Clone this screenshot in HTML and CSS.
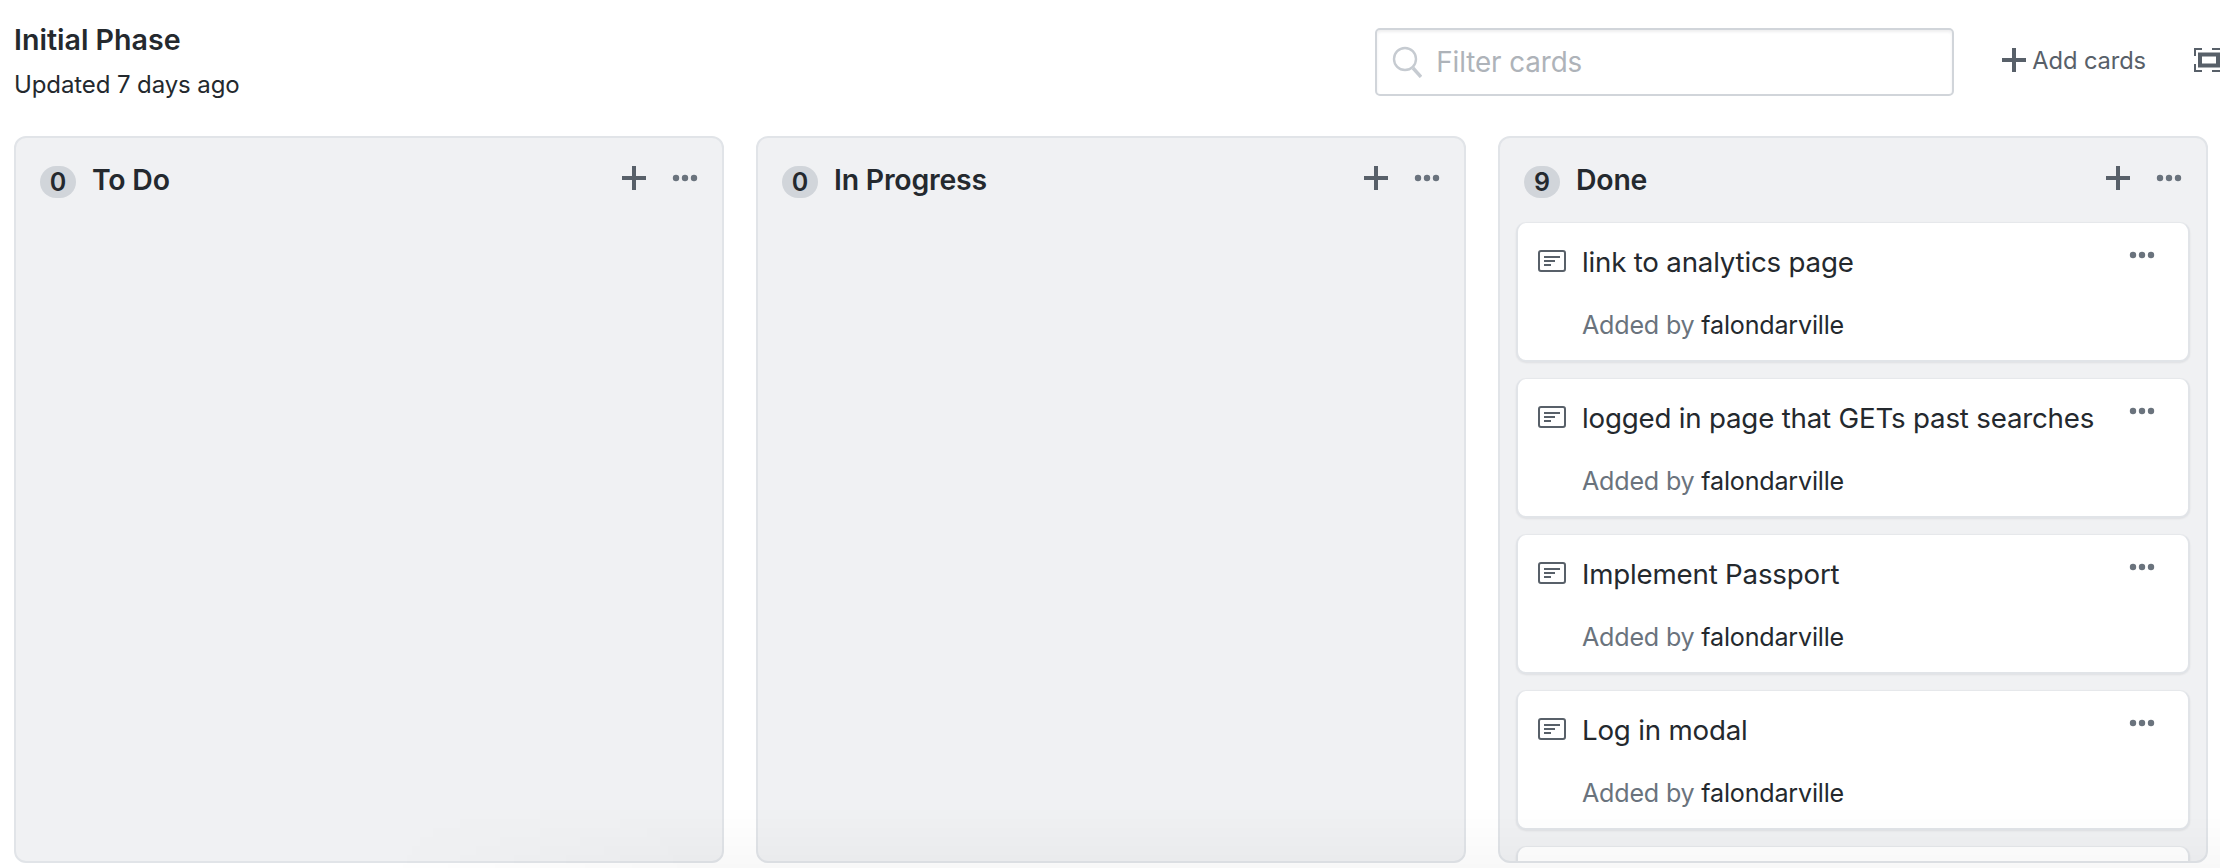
FILE: index.html
```html
<!DOCTYPE html>
<html lang="en">
<head>
<meta charset="utf-8">
<title>Initial Phase</title>
<link rel="stylesheet" href="styles.css">
</head>
<body>
<svg class="defs" width="0" height="0" aria-hidden="true">
  <symbol id="i-plus" viewBox="0 0 26 24"><path d="M13 0v24M1 12h24" fill="none" stroke="currentColor" stroke-width="4"/></symbol>
  <symbol id="i-dots" viewBox="0 0 26 8"><circle cx="4" cy="4" r="3.2" fill="currentColor"/><circle cx="13" cy="4" r="3.2" fill="currentColor"/><circle cx="22" cy="4" r="3.2" fill="currentColor"/></symbol>
  <symbol id="i-note" viewBox="0 0 28 22"><rect x="1" y="1" width="26" height="20" rx="2" fill="none" stroke="currentColor" stroke-width="2"/><path d="M6 7h16M6 11h11M6 15h7" fill="none" stroke="currentColor" stroke-width="2"/></symbol>
</svg>
<div class="page">
  <header class="topbar">
    <div class="project">
      <div class="project-name">Initial Phase</div>
      <div class="project-meta">Updated 7 days ago</div>
    </div>
    <div class="filter">
      <svg class="filter-icon" viewBox="0 0 30 32" aria-hidden="true"><circle cx="13" cy="13" r="11" fill="none" stroke="currentColor" stroke-width="2.4"/><path d="M21 22l8 9" fill="none" stroke="currentColor" stroke-width="3.4"/></svg>
      <span class="filter-text">Filter cards</span>
    </div>
    <div class="add-cards">
      <svg class="add-icon"><use href="#i-plus"/></svg>
      <span>Add cards</span>
    </div>
    <svg class="fullscreen" viewBox="0 0 26 24" aria-hidden="true"><path d="M1 8V1h7M18 1h8M1 16v7h7M18 23h8" fill="none" stroke="currentColor" stroke-width="2"/><rect x="6" y="6.5" width="18" height="11" fill="none" stroke="currentColor" stroke-width="4"/></svg>
  </header>
  <main class="board">
    <section class="column">
      <div class="column-head">
        <span class="count">0</span><h2 class="column-title">To Do</h2>
        <svg class="head-plus"><use href="#i-plus"/></svg>
        <svg class="head-dots"><use href="#i-dots"/></svg>
      </div>
    </section>
    <section class="column">
      <div class="column-head">
        <span class="count">0</span><h2 class="column-title">In Progress</h2>
        <svg class="head-plus"><use href="#i-plus"/></svg>
        <svg class="head-dots"><use href="#i-dots"/></svg>
      </div>
    </section>
    <section class="column">
      <div class="column-head">
        <span class="count">9</span><h2 class="column-title">Done</h2>
        <svg class="head-plus"><use href="#i-plus"/></svg>
        <svg class="head-dots"><use href="#i-dots"/></svg>
      </div>
      <div class="cards">
        <article class="card">
          <svg class="note"><use href="#i-note"/></svg>
          <div class="card-body"><div class="card-title">link to analytics page</div><div class="card-meta">Added by <span class="author">falondarville</span></div></div>
          <svg class="card-dots"><use href="#i-dots"/></svg>
        </article>
        <article class="card">
          <svg class="note"><use href="#i-note"/></svg>
          <div class="card-body"><div class="card-title">logged in page that GETs past searches</div><div class="card-meta">Added by <span class="author">falondarville</span></div></div>
          <svg class="card-dots"><use href="#i-dots"/></svg>
        </article>
        <article class="card">
          <svg class="note"><use href="#i-note"/></svg>
          <div class="card-body"><div class="card-title">Implement Passport</div><div class="card-meta">Added by <span class="author">falondarville</span></div></div>
          <svg class="card-dots"><use href="#i-dots"/></svg>
        </article>
        <article class="card">
          <svg class="note"><use href="#i-note"/></svg>
          <div class="card-body"><div class="card-title">Log in modal</div><div class="card-meta">Added by <span class="author">falondarville</span></div></div>
          <svg class="card-dots"><use href="#i-dots"/></svg>
        </article>
        <article class="card"></article>
      </div>
    </section>
  </main>
  <div class="fade"></div>
</div>
</body>
</html>
```
FILE: styles.css
```css
* { box-sizing: border-box; }
html, body { margin: 0; height: 100%; background: #fff; overflow: hidden; }
.defs { position: absolute; }
.page {
  position: relative;
  width: 2220px;
  height: 868px;
  overflow: hidden;
  font-family: Inter, "Noto Sans", sans-serif;
  color: #24292e;
  display: flex;
  flex-direction: column;
}
.topbar {
  height: 136px;
  flex: none;
  display: flex;
  align-items: flex-start;
  padding-left: 14px;
}
.project { padding-top: 22px; }
.project-name { font-size: 28.6px; line-height: 36px; font-weight: 600; }
.project-meta { font-size: 24px; line-height: 34px; margin-top: 10px; letter-spacing: -0.1px; }
.filter {
  margin-left: auto;
  margin-top: 28px;
  width: 579px;
  height: 68px;
  border: 2px solid #d1d5da;
  border-radius: 5px;
  box-shadow: inset 0 2px 3px rgba(27,31,35,.075);
  display: flex;
  align-items: center;
  padding-left: 15px;
}
.filter-icon { width: 30px; height: 32px; color: #c6cbd1; flex: none; }
.filter-text { margin-left: 14px; font-size: 27.8px; color: #aeb3b9; letter-spacing: -0.1px; }
.add-cards {
  margin-left: 47px;
  margin-top: 48px;
  height: 24px;
  display: flex;
  align-items: center;
  color: #586069;
  font-size: 23.7px;
  font-weight: 400;
  letter-spacing: -0.1px;
}
.add-icon { width: 26px; height: 24px; color: #586069; margin-right: 5px; flex: none; }
.fullscreen { margin-left: 48px; margin-top: 48px; width: 26px; height: 24px; color: #586069; flex: none; }
.board {
  flex: none;
  display: flex;
  gap: 32px;
  padding-left: 14px;
  height: 727px;
}
.column {
  width: 710px;
  height: 727px;
  flex: none;
  background: #f0f1f3;
  border: 2px solid #e1e4e8;
  border-radius: 12px;
  overflow: hidden;
}
.column-head {
  display: flex;
  align-items: flex-start;
  padding: 28px 24px 0 24px;
  height: 84px;
}
.count {
  width: 36px;
  height: 32px;
  border-radius: 16px;
  background: #d1d5da;
  font-size: 25px;
  font-weight: 600;
  line-height: 32px;
  text-align: center;
  flex: none;
}
.column-title { margin: -2px 0 0 16px; font-size: 28.4px; line-height: 32px; font-weight: 600; letter-spacing: -0.2px; }
.head-plus { margin-left: auto; width: 26px; height: 24px; color: #586069; flex: none; }
.head-dots { margin-left: 25px; margin-top: 8px; width: 26px; height: 8px; color: #6a737d; flex: none; }
.cards { display: flex; flex-direction: column; gap: 16px; padding: 0 16px; }
.card {
  height: 140px;
  flex: none;
  background: #fff;
  border: 2px solid #e1e4e8;
  border-top: 1px solid #e6e8eb;
  border-radius: 10px;
  box-shadow: 0 1px 2px rgba(27,31,35,.08);
  display: flex;
  align-items: flex-start;
  padding: 27px 33px 0 20px;
}
.note { width: 28px; height: 22px; color: #586069; flex: none; }
.card-body { margin-left: 16px; flex: 1; }
.card-title { font-size: 27.7px; line-height: 34px; margin-top: -5px; letter-spacing: -0.2px; }
.card-meta { font-size: 25.1px; line-height: 32px; margin-top: 30px; color: #6a737d; letter-spacing: -0.2px; }
.author { color: #24292e; }
.card-dots { width: 26px; height: 8px; color: #6a737d; flex: none; margin-top: 1px; }
.fade {
  position: absolute;
  left: 0;
  right: 0;
  bottom: 0;
  height: 62px;
  pointer-events: none;
  background: linear-gradient(to bottom, rgba(0,0,0,0), rgba(0,0,0,.028));
  -webkit-mask-image: linear-gradient(to right, rgba(0,0,0,0) 380px, #000 700px);
  mask-image: linear-gradient(to right, rgba(0,0,0,0) 380px, #000 700px);
}
```
